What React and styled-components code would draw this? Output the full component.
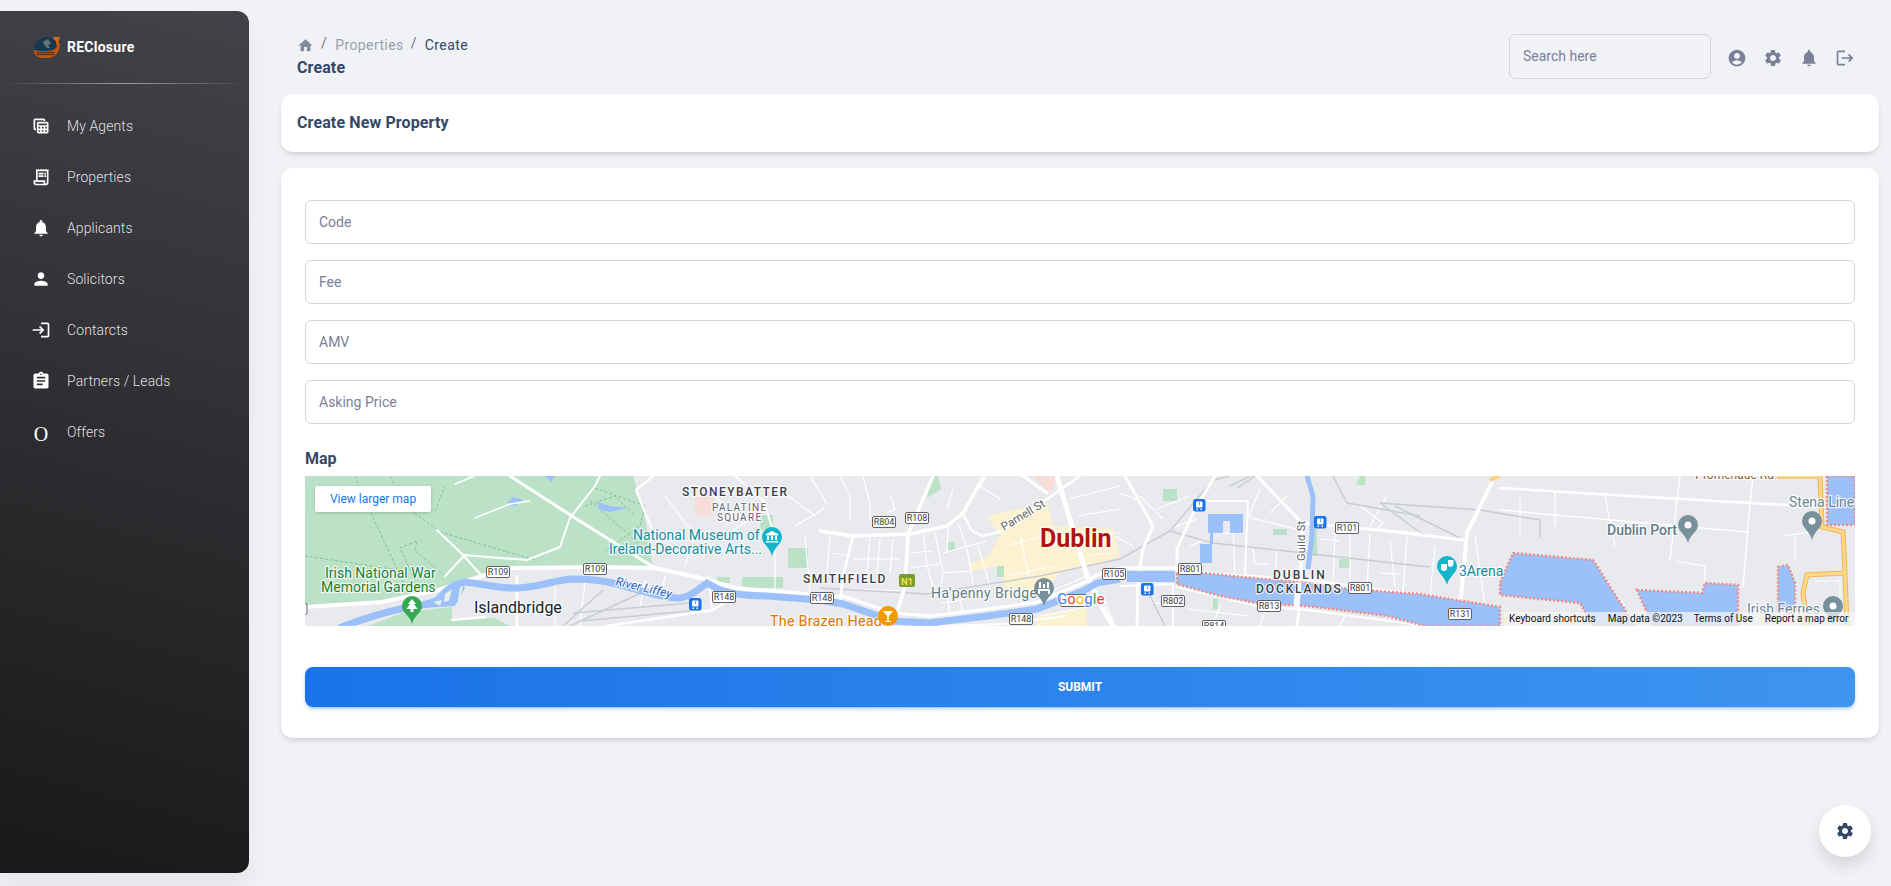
import React from "react";
import styled, { createGlobalStyle } from "styled-components";
import {
  MdTableView,
  MdOutlineReceiptLong,
  MdNotifications,
  MdPerson,
  MdLogin,
  MdAssignment,
  MdHome,
  MdAccountCircle,
  MdSettings,
  MdLogout,
} from "react-icons/md";

const GlobalStyle = createGlobalStyle`
  html, body { margin: 0; padding: 0; background: #f0f2f5; }
  body { font-family: Roboto, "Liberation Sans", sans-serif; color: #344767; }
  * { box-sizing: border-box; }
`;

const Page = styled.div`
  display: flex;
  min-height: 886px;
`;

const Sidebar = styled.aside`
  flex: 0 0 249px;
  height: 862px;
  margin-top: 11px;
  border-radius: 0 12px 12px 0;
  background: linear-gradient(195deg, #42424a, #191919);
  box-shadow: 0 20px 27px 0 rgba(0, 0, 0, 0.05);
  color: #fff;
`;

const Brand = styled.div`
  display: flex;
  align-items: center;
  gap: 7px;
  height: 72px;
  padding: 0 0 0 33px;
  font-size: 14px;
  font-weight: 700;
  letter-spacing: 0.25px;
`;

const Divider = styled.div`
  height: 1px;
  background: linear-gradient(to right, rgba(255, 255, 255, 0), rgba(255, 255, 255, 0.5), rgba(255, 255, 255, 0));
`;

const Nav = styled.nav`
  display: flex;
  flex-direction: column;
  padding-top: 16px;
`;

const NavItem = styled.a`
  display: flex;
  align-items: center;
  gap: 16px;
  height: 51px;
  padding-left: 31px;
  font-size: 14px;
  font-weight: 300;
  letter-spacing: 0.1px;
  color: rgba(255, 255, 255, 0.88);
`;

const NavIcon = styled.span`
  display: flex;
  justify-content: center;
  width: 20px;
  font-size: 20px;
  color: #fff;
`;

const LetterIcon = styled(NavIcon)`
  font-family: "Liberation Serif", serif;
  padding-top: 6px;
`;

const Main = styled.main`
  flex: 1;
  min-width: 0;
  margin: 0 12px 0 32px;
`;

const Header = styled.header`
  display: flex;
  justify-content: space-between;
  height: 94px;
  padding: 34px 24px 0 16px;
`;

const TitleBlock = styled.div`
  padding-top: 1px;
`;

const Crumbs = styled.div`
  display: flex;
  align-items: center;
  height: 20px;
  font-size: 14px;
  letter-spacing: 0.4px;
`;

const CrumbLink = styled.span`
  color: ${(p) => (p.$current ? "#344767" : "rgba(52, 71, 103, 0.5)")};
`;

const Slash = styled.span`
  margin: -4px 8px 0 7px;
  color: #6c757d;
`;

const HomeIcon = styled(MdHome)`
  font-size: 17px;
  color: rgba(52, 71, 103, 0.6);
`;

const PageTitle = styled.div`
  font-size: 16px;
  font-weight: 700;
  line-height: 26px;
  letter-spacing: 0.12px;
`;

const TopRight = styled.div`
  display: flex;
  align-items: flex-start;
  gap: 16px;
`;

const Search = styled.input`
  width: 202px;
  height: 45px;
  padding: 0 13px 2px;
  border: 1px solid #d2d6da;
  border-radius: 6px;
  background: transparent;
  font: 400 14px Roboto, sans-serif;
  outline: none;
  &::placeholder { color: #7b809a; opacity: 1; }
`;

const TopIcons = styled.div`
  display: flex;
  gap: 16px;
  margin-top: 14px;
  font-size: 20px;
  color: #7b809a;
`;

const Card = styled.section`
  border-radius: 12px;
  background: #fff;
  box-shadow: 0 4px 6px -1px rgba(0, 0, 0, 0.1), 0 2px 4px -1px rgba(0, 0, 0, 0.06);
`;

const TitleCard = styled(Card)`
  display: flex;
  align-items: center;
  height: 58px;
  margin-bottom: 16px;
  padding: 0 16px 2px;
  font-size: 16px;
  font-weight: 700;
  letter-spacing: 0.12px;
`;

const FormCard = styled(Card)`
  padding: 32px 24px 31px;
`;

const Form = styled.form`
  display: flex;
  flex-direction: column;
  gap: 16px;
`;

const Field = styled.input`
  width: 100%;
  height: 44px;
  padding: 0 13px;
  border: 1px solid #d2d6da;
  border-radius: 6px;
  background: #fff;
  font: 400 14px Roboto, sans-serif;
  outline: none;
  &::placeholder { color: #7b809a; opacity: 1; }
`;

const MapLabel = styled.div`
  margin-top: 6px;
  font-size: 16px;
  font-weight: 700;
  line-height: 26px;
`;

const MapFrame = styled.div`
  position: relative;
  height: 150px;
  margin-top: -12px;
  overflow: hidden;
  background: #e8eaed;
  svg { display: block; width: 100%; height: 150px; }
`;

const LargerMap = styled.a`
  position: absolute;
  top: 10px;
  left: 10px;
  display: flex;
  align-items: center;
  justify-content: center;
  width: 116px;
  height: 26px;
  border-radius: 2px;
  background: #fff;
  box-shadow: 0 1px 4px -1px rgba(0, 0, 0, 0.3);
  font-size: 12px;
  color: #1a73e8;
`;

const Attribution = styled.div`
  position: absolute;
  right: 0;
  bottom: 0;
  display: flex;
  width: 351px;
  height: 14px;
  background: rgba(245, 245, 245, 0.72);
  font-size: 10px;
  line-height: 14px;
  color: #111;
`;

const AttrItem = styled.span`
  padding: 0 ${(p) => p.$pad || 6}px 0 5px;
  white-space: nowrap;
  border-right: ${(p) => (p.$sep ? "1px solid #e6e6e6" : "0")};
`;

const Submit = styled.button`
  width: 100%;
  height: 40px;
  margin-top: 25px;
  border: 0;
  border-radius: 8px;
  background: linear-gradient(to right, #1a73e8, #3e95f0);
  box-shadow: 0 3px 3px 0 rgba(26, 115, 232, 0.15), 0 3px 1px -2px rgba(26, 115, 232, 0.2), 0 1px 5px 0 rgba(26, 115, 232, 0.15);
  font: 700 12px Roboto, sans-serif;
  text-transform: uppercase;
  color: #fff;
`;

const FloatingButton = styled.button`
  position: fixed;
  right: 20px;
  bottom: 29px;
  display: flex;
  align-items: center;
  justify-content: center;
  width: 52px;
  height: 52px;
  border: 0;
  border-radius: 50%;
  background: #fff;
  box-shadow: 0 8px 16px rgba(0, 0, 0, 0.12);
  font-size: 20px;
  color: #344767;
`;

// map text keeps the white halo google puts round its labels
const MapText = styled.text`
  font-family: Roboto, sans-serif;
  paint-order: stroke;
  stroke: rgba(255, 255, 255, 0.8);
  stroke-width: 2.5px;
  stroke-linejoin: round;
`;

const menu = [
  ["My Agents", <MdTableView />],
  ["Properties", <MdOutlineReceiptLong />],
  ["Applicants", <MdNotifications />],
  ["Solicitors", <MdPerson />],
  ["Contarcts", <MdLogin />],
  ["Partners / Leads", <MdAssignment />],
];

const fields = ["Code", "Fee", "AMV", "Asking Price"];

// everything below is in map pixels, 1550 x 150
const parks = [
  "M0 0H328L340 41L348 92L300 91L207 92L180 99L133 114L77 126L0 131Z",
  "M63 150L100 136L147 131L147 144L190 142L205 150Z",
];
const greens = [
  "M625 0H633L636 13L622 22Z",
  "M858 13H872V25H858Z", "M692 90H699V101H692Z", "M643 66H650V74H643Z", "M968 53H982V59H968Z", "M1034 83H1045V92H1034Z",
  "M1055 0H1060V9H1051Z", "M908 123H913V133H908Z", "M1008 53H1012V80H1008Z",
  "M483 72H503V92H483Z", "M455 39H468V54H455Z", "M412 101H425V107H412Z", "M437 101H478V112H437Z",
];
const pinks = ["M390 21H408V39H390Z", "M728 0H752L745 17Z"];
const basins = [
  "M872 98L898 97L948 102L1002 107L1042 113L1115 118L1195 131V150H1120L1082 140L1002 130L952 127L915 120L872 108Z",
  "M1208 77L1288 84L1322 137L1330 150H1288L1275 127L1195 119L1195 107Z",
  "M1332 114L1397 117L1400 107L1433 109L1433 150H1348Z",
  "M1522 0H1550V49H1522Z",
  "M1473 91L1483 89L1490 107V134H1473Z",
];
const whiteRoads = [
  ["M0 131L77 126L133 114L180 99L207 92L300 91L350 92L400 103L430 112L500 118L520 120", 4],
  ["M205 0L270 42L350 92", 3],
  ["M265 42L255 71L222 84L158 79L132 54", 2],
  ["M158 79L175 98M160 79L140 100M265 42L290 10L295 0M331 14L348 0M331 14L342 41L350 60", 2],
  ["M169 0L150 8M170 42L205 28L225 25", 1.5],
  ["M515 55L548 60L605 58L642 50L658 37L678 2", 3.5],
  ["M658 38L667 55L678 60L697 55L735 28L775 0", 2.5],
  ["M628 0L615 30L603 58L600 110L593 133", 3.5],
  ["M548 60L538 100L535 127", 2.5],
  ["M752 0L782 100L798 133L808 150", 5],
  ["M718 0L742 17", 3],
  ["M538 120L588 137L625 140L682 133L732 126L778 107L792 99L815 92L872 92", 3],
  ["M515 122L538 120", 3],
  ["M635 150L700 148L760 140", 2],
  ["M820 0L848 50L838 73L833 100L832 150", 3],
  ["M910 0L890 33L872 73L872 93", 3],
  ["M895 25H943L940 97", 2],
  ["M952 0L997 47L1115 58", 3],
  ["M997 47L995 127L992 150", 3],
  ["M872 95L1002 104L1155 124", 2.5],
  ["M872 111L952 130L1002 134L1115 149", 2],
  ["M815 110L868 108L868 150", 2],
  ["M1188 4L1162 57L1155 131L1152 150", 4],
  ["M1075 54L1158 64", 3],
  ["M1195 12L1308 19L1445 27L1515 31", 2.5],
  ["M1195 34L1442 56", 1.5],
  ["M1375 0L1365 84M1448 0L1445 27L1438 111", 1.5],
  ["M302 150L408 134L403 101M408 134L430 120", 2.5],
  ["M147 144L180 141M212 100V150", 2.5],
  ["M430 0L458 24L468 54M331 14L345 3", 2],
];
const thinStreets =
  "M360 20L390 60L380 90M400 10L440 50M420 60L450 40M470 10L510 40M490 50L520 32M505 0L522 28M500 60L505 116M470 60V115M250 110V150M280 105L275 150M340 105L335 130M360 100L355 125" +
  "M630 57L638 97L636 110M643 52L642 77M653 47L662 73L668 107M672 67L685 110M618 58L622 90L630 117M605 77L628 75M638 77L682 65M605 92L635 88M638 97L665 95M565 60L562 100M525 60L522 97M528 77L545 80M548 83L595 83M575 63L572 97M588 63L585 97M548 113L595 115" +
  "M535 0L545 20L545 43M558 0L565 27L565 43M585 20L590 33L582 37M648 13L642 33M695 23L675 10L682 0M765 23L815 10M772 40L815 33M768 60L815 57M782 80L808 77M728 123L782 100M735 140L802 127M635 127L662 123M642 117L645 140M655 123L658 137M700 70L740 60M700 100L750 90M715 60L725 105" +
  "M815 17L832 24M835 20L858 43M852 33L885 20M865 53L892 43M885 70L900 63M905 57H942M928 57L930 97M948 73L950 88L965 88M972 73L970 97M945 42L992 53M955 13L943 42M982 20L965 37M1015 63L1035 65M1030 57L1028 110M1045 57V110M1065 57L1062 113M1102 60L1098 117M1055 30L1078 47L1070 55M1082 20L1065 50M1075 97L1095 98M848 127L867 128M882 133L945 140M915 130L908 150M960 134L955 150M1040 140L1035 150M810 60L828 70M800 125L810 150" +
  "M1130 70L1125 120M1085 65L1090 110M1170 60L1180 130M1215 20V60M1250 15V50M1300 20L1310 70M1290 90L1320 130M1370 85L1400 90V105M1490 60V85M1480 60L1510 55M1510 105H1535V135";
const railPaths = [
  "M515 112L622 118L735 100L815 83L865 55L908 4L925 0",
  "M865 55L908 67L1115 90L1125 91",
  "M1028 0L1042 27L1115 40M925 10L945 0M932 12L950 0M845 120L860 150",
  "M1075 27L1175 34L1235 44L1235 61M1075 27L1120 60M1090 30L1155 62M258 150L298 114M268 137L385 127M275 145L385 135M265 150L340 115",
];
const shields = [
  [181, 90, "R109"], [278, 87, "R109"], [407, 115, "R148"], [505, 116, "R148"], [567, 40, "R804"], [600, 36, "R108"],
  [704, 137, "R148"], [797, 92, "R105"], [873, 87, "R801"], [856, 119, "R802"], [952, 124, "R813"], [897, 144, "R814"],
  [1043, 106, "R801"], [1030, 46, "R101"], [1143, 132, "R131"],
];
const trains = [[384, 122], [888, 23], [1009, 40], [836, 107]];
const pins = [
  [107, 130, "#34a853", 18, "tree"], [467, 61, "#12b5cb", 19, "museum"], [739, 112, "#78909c", 18, "bridge"],
  [1142, 90, "#12b5cb", 19, "mask"], [1383, 49, "#78909c", 18, "dot"], [1507, 45, "#78909c", 19, "dot"], [1528, 130, "#78909c", 19, "dot"],
];
const labels = [
  ["STONEYBATTER", 377, 20, 12, "#3c4043", 500, 1.45],
  ["PALATINE", 407, 35, 10, "#5f6368", 400, 1.3],
  ["SQUARE", 412, 45, 10, "#5f6368", 400, 1.3],
  ["National Museum of", 328, 64, 14, "#138d9c", 400, 0],
  ["Ireland-Decorative Arts...", 304, 78, 14, "#138d9c", 400, 0],
  ["Irish National War", 20, 102, 14, "#188038", 400, 0],
  ["Memorial Gardens", 16, 116, 14, "#188038", 400, 0],
  ["Islandbridge", 169, 137, 16, "#202124", 400, 0],
  ["The Brazen Head", 465, 150, 14.4, "#e37400", 400, 0.2],
  ["SMITHFIELD", 498, 107, 12, "#3c4043", 500, 1.6],
  ["Dublin", 735, 71, 25, "#b31412", 700, 0],
  ["Ha'penny Bridge", 626, 122, 14, "#5f7d8c", 400, 0.4],
  ["DUBLIN", 968, 103, 12, "#3c4043", 500, 2],
  ["DOCKLANDS", 951, 117, 12, "#3c4043", 500, 1.9],
  ["3Arena", 1154, 100, 14, "#138d9c", 400, 0],
  ["Dublin Port", 1302, 59, 14, "#5f7d8c", 500, 0],
  ["Stena Line", 1484, 31, 14, "#6f8794", 400, 0],
  ["Irish Ferries", 1442, 138, 14, "#6f8794", 400, 0],
];

function PinGlyph({ kind, x, y }) {
  if (kind === "tree") return <path d={`M${x} ${y - 7}l4 5h-2l3.5 5h-4v3h-3v-3h-4l3.5-5h-2z`} fill="#fff" />;
  if (kind === "museum") return <path d={`M${x} ${y - 6}l6 3v1.5h-12v-1.5zM${x - 5} ${y - 1}h2v4h-2zM${x - 1} ${y - 1}h2v4h-2zM${x + 3} ${y - 1}h2v4h-2zM${x - 6} ${y + 4}h12v1.5h-12z`} fill="#fff" />;
  if (kind === "bridge") return <path d={`M${x - 6} ${y + 1}h12v2h-12zM${x - 5} ${y - 6}h2v6h-2zM${x + 3} ${y - 6}h2v6h-2zM${x - 1} ${y - 4}h2v4h-2zM${x - 6} ${y + 3}h2v3h-2zM${x + 4} ${y + 3}h2v3h-2z`} fill="#fff" />;
  if (kind === "mask") return <path d={`M${x - 6} ${y - 2}h6v4a3 3 0 0 1 -6 0zM${x + 1} ${y - 6}h5.5v4a3 3 0 0 1 -5.5 1.5z`} fill="#fff" />;
  return <circle cx={x} cy={y} r="3.5" fill="#fff" />;
}

function MapView() {
  return (
    <svg viewBox="0 0 1550 150" preserveAspectRatio="none">
      <rect width="1550" height="150" fill="#e8eaed" />
      {parks.map((d) => <path key={d} d={d} fill="#bbe2c6" />)}
      <path d="M682 40L742 27L748 50L808 53L815 80L795 87L755 97L742 113L702 123L695 90L665 95V87L682 82L695 60ZM732 140L782 132V150H732Z" fill="#fdf2cf" />
      {greens.map((d) => <path key={d} d={d} fill="#bbe2c6" />)}
      {pinks.map((d) => <path key={d} d={d} fill="#f8dcd8" />)}
      <path d={thinStreets} fill="none" stroke="#fff" strokeWidth="1.2" />
      <path d="M130 35L140 10M132 54L100 30L85 0M135 56L230 84M140 100L110 75L112 65L95 72L110 105M290 12L340 30L335 50L300 75M285 25L320 55L335 70M280 30L310 20L330 40M50 0L65 35L100 110M0 80L100 95" fill="none" stroke="#7ec497" strokeWidth="1" strokeDasharray="3 2" />
      <path d="M202 27L208 21L218 24L210 30ZM292 26L305 30L323 32L305 36L295 34ZM240 0H250L246 6Z" fill="#9cc0f9" />
      {railPaths.map((d) => <path key={d} d={d} fill="none" stroke="#c9ccd1" strokeWidth="1.5" />)}
      {whiteRoads.map(([d, w]) => <path key={d} d={d} fill="none" stroke="#fff" strokeWidth={w} strokeLinecap="round" strokeLinejoin="round" />)}
      <path d="M34 152C60 142 80 136 100 132C115 130 125 128 133 124C142 112 150 108 160 106C180 108 195 113 213 112C235 111 250 104 267 103C285 103 300 105 312 108C335 114 355 122 372 122C385 122 395 112 402 107L415 114C430 119 445 120 462 120L515 124L538 128L588 145L625 147L682 140L732 133L778 115L792 107L815 103" fill="none" stroke="#9cc0f9" strokeWidth="7" />
      <path d="M118 132L135 117L155 106L160 112L150 130Z" fill="#9cc0f9" />
      <path d="M128 126L137 124L135 130ZM140 118L147 113L144 125L139 126ZM155 111L158 110L155 124L153 124Z" fill="#e4efe6" />
      <path d="M822 95H870V106H822ZM903 38H938V57H925V45H918V57H908V68H907V87H895V68H905V57H903Z" fill="#9cc0f9" />
      <path d="M1002 0L1008 20L1007 60L1003 93" fill="none" stroke="#9cc0f9" strokeWidth="5" />
      {basins.map((d) => <path key={d} d={d} fill="#9cc0f9" stroke="#ee8c85" strokeWidth="2.5" strokeDasharray="2 2" />)}
      <path d="M992 108L995 108L993 130L990 130Z" fill="#fff" stroke="#fff" strokeWidth="3" />
      <path d="M1185 4L1195 0" stroke="#fdd37c" strokeWidth="4" />
      <path d="M1472 0H1515L1517 51L1538 56L1540 97L1502 99L1498 117L1502 150M1540 97L1542 150" fill="none" stroke="#f3b64c" strokeWidth="5" />
      <path d="M1472 0H1515L1517 51L1538 56L1540 97L1502 99L1498 117L1502 150M1540 97L1542 150" fill="none" stroke="#fdd98f" strokeWidth="3" />

      <rect x="-21" y="127.5" width="23" height="11" rx="1.5" fill="#fff" stroke="#5f6368" />
      <rect x="755.5" y="118.5" width="26" height="12" rx="1.5" fill="#fff" stroke="#5f6368" />
      {shields.map(([x, y, t]) => (
        <g key={x + t}>
          <rect x={x + 0.5} y={y + 0.5} width="23" height="11" rx="1.5" fill="#fff" stroke="#5f6368" />
          <text x={x + 12} y={y + 9.3} textAnchor="middle" fontFamily="Roboto, sans-serif" fontSize="9" fill="#3c4043">{t}</text>
        </g>
      ))}
      {trains.map(([x, y]) => (
        <g key={x}>
          <rect x={x} y={y} width="12.5" height="12.5" rx="2.5" fill="#1a73e8" />
          <rect x={x + 3} y={y + 2.5} width="6.5" height="6" rx="1" fill="#fff" />
          <path d={`M${x + 3.5} ${y + 9.5}h1.5v1.5h-1.5zM${x + 7.5} ${y + 9.5}h1.5v1.5h-1.5z`} fill="#fff" />
          <rect x={x + 6} y={y + 3} width=".7" height="3" fill="#1a73e8" />
        </g>
      ))}
      <rect x="594" y="98" width="16" height="13" rx="2" fill="#7d9a2c" />
      <text x="602" y="108.5" textAnchor="middle" fontFamily="Roboto, sans-serif" fontSize="9.5" fontWeight="700" fill="#f5e24a">N1</text>

      {labels.map(([t, x, y, size, color, weight, spacing]) => (
        <MapText key={t} x={x} y={y} fontSize={size} fill={color} fontWeight={weight} letterSpacing={spacing}>{t}</MapText>
      ))}
      <MapText x="310" y="109" fontSize="12" fontStyle="italic" fill="#2a62c0" transform="rotate(13 310 109)">River Liffey</MapText>
      <MapText x="699" y="55" fontSize="11.5" fill="#5f6368" transform="rotate(-31 699 55)">Parnell St</MapText>
      <MapText x="1000" y="85" fontSize="11" fill="#5f6368" letterSpacing="0.3" transform="rotate(-90 1000 85)">Guild St</MapText>
      <MapText x="1469" y="3" fontSize="12" fill="#8d5a20" textAnchor="end">Promenade Rd</MapText>

      {pins.map(([x, y, color, h, kind]) => (
        <g key={x}>
          <path d={`M${x} ${y + h}C${x - 2} ${y + h - 9} ${x - 10} ${y + 7} ${x - 10} ${y}a10 10 0 0 1 20 0C${x + 10} ${y + 7} ${x + 2} ${y + h - 9} ${x} ${y + h}Z`} fill={color} />
          <PinGlyph kind={kind} x={x} y={y} />
        </g>
      ))}
      <circle cx="583" cy="140" r="10" fill="#f29900" />
      <path d="M578 135h10l-4.2 5v5h2.2v1h-6v-1h2.2v-5z" fill="#fff" />

      <MapText x="752" y="128" fontSize="15">
        <tspan fill="#4285f4">G</tspan><tspan fill="#ea4335">o</tspan><tspan fill="#fbbc05">o</tspan><tspan fill="#4285f4">g</tspan><tspan fill="#34a853">l</tspan><tspan fill="#ea4335">e</tspan>
      </MapText>
    </svg>
  );
}

function Logo() {
  return (
    <svg width="27" height="22" viewBox="0 0 27 22">
      <path d="M1 13C.5 21 6 22 13 22C20 22 26 20 27 8L23 5C23 11 20 14 13 14C8 14 4 14 1 13Z" fill="#c4560f" />
      <path d="M1 14C1 6 7 1 13 1C17 1 20 2 22 4L24 11C21 14 18 15 13 15C8 15 4 15 1 14Z" fill="#173a52" />
      <path d="M10 6L15 3L18 8L15 9L17 12H14L12 9.5L11.5 10Z" fill="#6d7478" />
      <path d="M20 1L27 1L25 8L23.5 5.5L21 3.5Z" fill="#d9681a" />
      <rect x="3" y="15.5" width="19" height="4" fill="#a64a10" />
      <path d="M4 16.5h17M4 18.5h17" stroke="#2a2a2a" strokeWidth="1" strokeDasharray="1.5 .8" />
    </svg>
  );
}

export default function App() {
  return (
    <Page>
      <GlobalStyle />
      <Sidebar>
        <Brand>
          <Logo />
          REClosure
        </Brand>
        <Divider />
        <Nav>
          {menu.map(([label, icon]) => (
            <NavItem key={label}>
              <NavIcon>{icon}</NavIcon>
              {label}
            </NavItem>
          ))}
          <NavItem>
            <LetterIcon>O</LetterIcon>
            Offers
          </NavItem>
        </Nav>
      </Sidebar>

      <Main>
        <Header>
          <TitleBlock>
            <Crumbs>
              <HomeIcon />
              <Slash>/</Slash>
              <CrumbLink>Properties</CrumbLink>
              <Slash>/</Slash>
              <CrumbLink $current>Create</CrumbLink>
            </Crumbs>
            <PageTitle>Create</PageTitle>
          </TitleBlock>
          <TopRight>
            <Search placeholder="Search here" />
            <TopIcons>
              <MdAccountCircle />
              <MdSettings />
              <MdNotifications />
              <MdLogout />
            </TopIcons>
          </TopRight>
        </Header>

        <TitleCard>Create New Property</TitleCard>

        <FormCard>
          <Form onSubmit={(e) => e.preventDefault()}>
            {fields.map((f) => <Field key={f} placeholder={f} />)}
            <MapLabel>Map</MapLabel>
            <MapFrame>
              <MapView />
              <LargerMap>View larger map</LargerMap>
              <Attribution>
                <AttrItem $sep>Keyboard shortcuts</AttrItem>
                <AttrItem $sep $pad={5}>Map data ©2023</AttrItem>
                <AttrItem $pad={7}>Terms of Use</AttrItem>
                <AttrItem>Report a map error</AttrItem>
              </Attribution>
            </MapFrame>
            <Submit type="submit">Submit</Submit>
          </Form>
        </FormCard>
      </Main>

      <FloatingButton><MdSettings /></FloatingButton>
    </Page>
  );
}
